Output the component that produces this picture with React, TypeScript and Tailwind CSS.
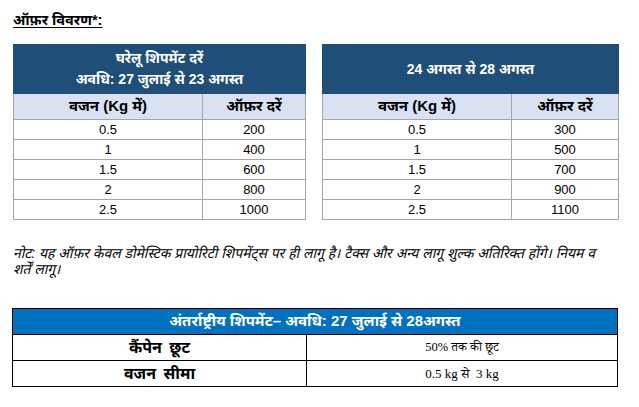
import React from "react";

const left = [
  ["0.5", "200"],
  ["1", "400"],
  ["1.5", "600"],
  ["2", "800"],
  ["2.5", "1000"],
];
const right = [
  ["0.5", "300"],
  ["1", "500"],
  ["1.5", "700"],
  ["2", "900"],
  ["2.5", "1100"],
];

function RateTable({
  width,
  col1,
  header,
  rows,
}: {
  width: string;
  col1: string;
  header: React.ReactNode;
  rows: string[][];
}) {
  return (
    <table className={`${width} border-collapse table-fixed text-[13px] text-black`}>
      <colgroup>
        <col className={col1} />
        <col />
      </colgroup>
      <thead>
        <tr>
          <th
            colSpan={2}
            className="h-[49px] bg-[#1f4e79] border border-[#1f4e79] text-white font-bold text-[14px] leading-[21px] p-0"
          >
            {header}
          </th>
        </tr>
        <tr>
          <th className="h-[26px] bg-[#d9e1f2] border border-[#a6a6a6] font-bold text-[15px] p-0">
            वजन (Kg में)
          </th>
          <th className="h-[26px] bg-[#d9e1f2] border border-[#a6a6a6] font-bold text-[15px] p-0">
            ऑफ़र दरें
          </th>
        </tr>
      </thead>
      <tbody>
        {rows.map((r, i) => (
          <tr key={i}>
            <td className="h-[20px] border border-[#a6a6a6] text-center p-0 leading-[19px]">{r[0]}</td>
            <td className="h-[20px] border border-[#a6a6a6] text-center p-0 leading-[19px]">{r[1]}</td>
          </tr>
        ))}
      </tbody>
    </table>
  );
}

export default function App() {
  return (
    <div
      className="w-[639px] h-[407px] bg-white overflow-hidden text-black"
      style={{ fontFamily: '"Liberation Sans", Arial, "Noto Sans Devanagari", "Noto Sans", sans-serif' }}
    >
      <div className="pl-[13px] pt-[8px] h-[44px]">
        <span className="font-bold text-[14.5px] underline underline-offset-2 leading-[18px]">ऑफ़र विवरण*:</span>
      </div>
      <div className="flex pl-[13px] gap-[16px]">
        <RateTable
          width="w-[293px]"
          col1="w-[189px]"
          header={
            <>
              <div>घरेलू शिपमेंट दरें</div>
              <div>अवधि: 27 जुलाई से 23 अगस्त</div>
            </>
          }
          rows={left}
        />
        <RateTable width="w-[297px]" col1="w-[189px]" header={<div>24 अगस्त से 28 अगस्त</div>} rows={right} />
      </div>
      <div className="pl-[13px] pt-[25px] italic text-[13.9px] leading-[16px] whitespace-nowrap">
        <div>
          नोट: यह ऑफ़र केवल डोमेस्टिक प्रायोरिटी शिपमेंट्स पर ही लागू है। टैक्स और अन्य लागू शुल्क अतिरिक्त होंगे। नियम व
        </div>
        <div>शर्तें लागू।</div>
      </div>
      <div className="pl-[12px] pt-[31px]">
        <table className="w-[606px] border-collapse table-fixed">
          <colgroup>
            <col className="w-[294px]" />
            <col />
          </colgroup>
          <thead>
            <tr>
              <th
                colSpan={2}
                className="h-[26px] bg-[#0070c0] border border-black text-white font-bold text-[15px] p-0"
              >
                अंतर्राष्ट्रीय शिपमेंट– अवधि: 27 जुलाई से 28अगस्त
              </th>
            </tr>
          </thead>
          <tbody>
            <tr>
              <td className="h-[26px] border border-black text-center font-bold text-[16px] p-0 [word-spacing:3px]">
                कैंपेन छूट
              </td>
              <td
                className="h-[26px] border border-black text-center text-[12.5px] p-0"
                style={{ fontFamily: '"Liberation Serif", "Noto Serif Devanagari", serif' }}
              >
                50% तक की छूट
              </td>
            </tr>
            <tr>
              <td className="h-[26px] border border-black text-center font-bold text-[16px] p-0 [word-spacing:3px]">
                वजन सीमा
              </td>
              <td
                className="h-[26px] border border-black text-center text-[13px] p-0"
                style={{ fontFamily: '"Liberation Serif", "Noto Serif Devanagari", serif' }}
              >
                0.5 kg से&nbsp; 3 kg
              </td>
            </tr>
          </tbody>
        </table>
      </div>
    </div>
  );
}
